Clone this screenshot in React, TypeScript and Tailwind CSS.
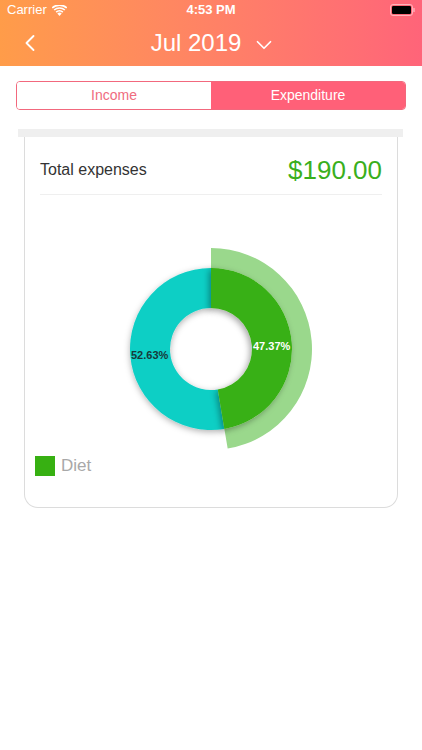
import { ChevronLeft, ChevronDown } from 'lucide-react';

const CX = 171;
const CY = 154;

function pt(r: number, deg: number) {
  const a = (deg * Math.PI) / 180;
  return [CX + r * Math.sin(a), CY - r * Math.cos(a)];
}

function sector(r0: number, r1: number, a0: number, a1: number) {
  const large = a1 - a0 > 180 ? 1 : 0;
  const [x0, y0] = pt(r1, a0);
  const [x1, y1] = pt(r1, a1);
  const [x2, y2] = pt(r0, a1);
  const [x3, y3] = pt(r0, a0);
  return `M${x0} ${y0} A${r1} ${r1} 0 ${large} 1 ${x1} ${y1} L${x2} ${y2} A${r0} ${r0} 0 ${large} 0 ${x3} ${y3} Z`;
}

function StatusBar() {
  return (
    <div className="h-5 flex items-center justify-between px-[7px] text-white text-[13px]">
      <div className="flex items-center gap-[5px] w-[120px]">
        <span>Carrier</span>
        <svg width="15" height="11" viewBox="0 0 15 11">
          <path d="M7.5 11 L5.3 8.4 A3.4 3.4 0 0 1 9.7 8.4 Z" fill="white" />
          <path d="M3.6 6.6 A5.8 5.8 0 0 1 11.4 6.6 L10.3 7.8 A4.2 4.2 0 0 0 4.7 7.8 Z" fill="white" />
          <path d="M1.6 4.4 A8.8 8.8 0 0 1 13.4 4.4 L12.3 5.6 A7.2 7.2 0 0 0 2.7 5.6 Z" fill="white" />
          <path d="M-0.3 2.3 A11.6 11.6 0 0 1 15.3 2.3 L14.2 3.5 A10 10 0 0 0 0.8 3.5 Z" fill="white" />
        </svg>
      </div>
      <span className="font-bold text-[13px]">4:53 PM</span>
      <div className="w-[120px] flex justify-end">
        <svg width="25" height="12" viewBox="0 0 25 12">
          <rect x="0.5" y="0.5" width="22" height="11" rx="2.5" fill="none" stroke="white" strokeOpacity="0.5" />
          <rect x="2" y="2" width="19" height="8" rx="1.3" fill="black" />
          <rect x="23.3" y="4" width="1.4" height="4" rx="0.6" fill="white" fillOpacity="0.5" />
        </svg>
      </div>
    </div>
  );
}

export default function App() {
  const split = 170.5;
  return (
    <div className="w-[422px] h-[750px] bg-white overflow-hidden" style={{ fontFamily: '"Liberation Sans", Arial, sans-serif' }}>
      <div className="bg-gradient-to-r from-[#ff9c49] to-[#ff6479]">
        <StatusBar />
        <div className="h-[46px] flex items-center relative">
          <ChevronLeft className="absolute left-[16px] top-[9px] text-white" size={28} strokeWidth={1.6} />
          <div className="flex-1 flex items-center justify-center gap-[10px] pl-[6px]">
            <span className="text-white text-[24px]">Jul 2019</span>
            <ChevronDown className="text-white mt-[3px]" size={26} strokeWidth={1.6} />
          </div>
        </div>
      </div>

      <div className="mx-[16px] mt-[15px] h-[29px] flex rounded-[4px] border border-[#f2687d] overflow-hidden text-[14px]">
        <div className="flex-1 flex items-center justify-center bg-white text-[#ef6c80]">Income</div>
        <div className="flex-1 flex items-center justify-center bg-[#ff6078] text-white">Expenditure</div>
      </div>

      <div className="ml-[18px] mr-[19px] mt-[19px]">
        <div className="h-2 bg-[#efefef]" />
        <div className="ml-[6px] mr-[5px] border-x border-b border-[#dcdcdc] rounded-b-[14px] px-[15px] pb-[28px]">
          <div className="pt-[19px] pb-[10px] border-b border-[#efefef]">
            <div className="h-[28px] flex items-center justify-between">
              <span className="text-[16px] text-[#333]">Total expenses</span>
              <span className="text-[26px] text-[#3aaf1c]">$190.00</span>
            </div>
          </div>

          <svg width="342" height="256" viewBox="0 0 342 256" className="block">
            <defs>
              <filter id="sh" x="-30%" y="-30%" width="160%" height="160%">
                <feDropShadow dx="0" dy="2" stdDeviation="3" floodColor="#000" floodOpacity="0.3" />
              </filter>
              <filter id="sh2" x="-30%" y="-30%" width="160%" height="160%">
                <feDropShadow dx="-2" dy="2" stdDeviation="3" floodColor="#000" floodOpacity="0.35" />
              </filter>
            </defs>
            <path d={sector(81, 101, 0, split)} fill="#9ad88c" />
            <g filter="url(#sh)">
              <path d={sector(41, 81, split, 360)} fill="#0dcfc5" />
            </g>
            <g filter="url(#sh2)">
              <path d={sector(41, 81, 0, split)} fill="#37b012" />
            </g>
            <text x="91" y="164" textAnchor="start" fontSize="11" fontWeight="bold" fill="#163a3a">52.63%</text>
            <text x="213" y="155" textAnchor="start" fontSize="11" fontWeight="bold" fill="#ffffff">47.37%</text>
          </svg>

          <div className="-ml-[5px] mt-[2px] flex items-center gap-[6px]">
            <div className="w-5 h-5 bg-[#37b012]" />
            <span className="text-[17px] text-[#a8a8a8]">Diet</span>
          </div>
        </div>
      </div>
    </div>
  );
}
